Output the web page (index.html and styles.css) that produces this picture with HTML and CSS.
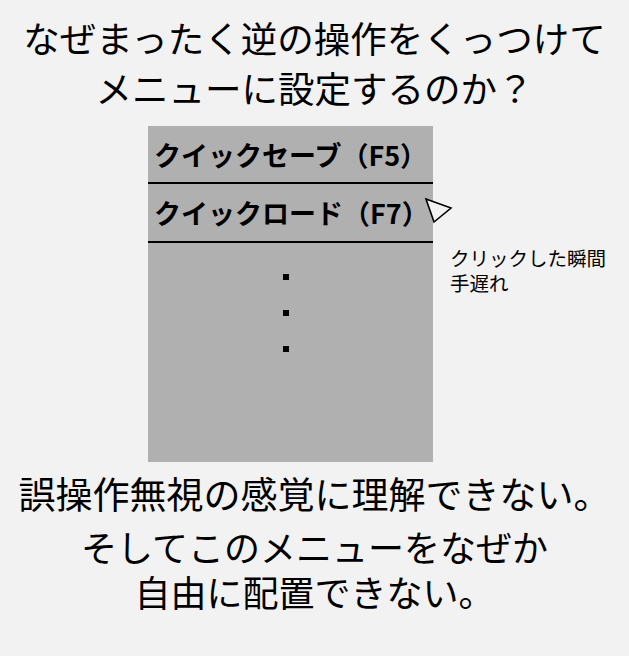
FILE: index.html
```html
<!DOCTYPE html>
<html lang="ja">
<head>
    <meta charset="UTF-8">
    <meta name="viewport" content="width=device-width, initial-scale=1.0">
    <title>クイックロード</title>
    <link rel="stylesheet" href="styles.css">
</head>
<body>
    <h1 class="headline">なぜまったく逆の操作をくっつけて<br>メニューに設定するのか？</h1>

    <div class="stage">
        <div class="menu">
            <div class="menu-item">クイックセーブ（F5）</div>
            <div class="menu-item">クイックロード（F7）</div>
            <div class="menu-more">
                <span class="dot"></span>
                <span class="dot"></span>
                <span class="dot"></span>
            </div>
            <!-- mouse pointer hovering next to the load item -->
            <svg class="pointer" width="30" height="28" viewBox="0 0 30 28">
                <polygon points="2,2 27,11 10,25" fill="#f2f2f2" stroke="#000" stroke-width="1.6" stroke-linejoin="miter"/>
            </svg>
        </div>
        <p class="note">クリックした瞬間<br>手遅れ</p>
    </div>

    <p class="closing">誤操作無視の感覚に理解できない。</p>
    <p class="closing closing-last">そしてこのメニューをなぜか<br>自由に配置できない。</p>
</body>
</html>
```

FILE: styles.css
```css
body {
    margin: 0;
    background-color: #f2f2f2;
    color: #000;
    font-family: "Noto Sans CJK JP", "Noto Sans", sans-serif;
}
.headline {
    margin: 0;
    padding-top: 13px;
    font-size: 36.5px;
    font-weight: 400;
    line-height: 50px;
    text-align: center;
}
.stage {
    display: flex;
    margin-top: 13px;
    padding-left: 148px;
}
.menu {
    position: relative;
    width: 285px;
    height: 336px;
    background-color: #b0b0b0;
}
.menu-item {
    height: 57px;
    padding-left: 6px;
    border-bottom: 2px solid #000;
    font-size: 27px;
    font-weight: 700;
    line-height: 57px;
    white-space: nowrap;
}
.menu-item:first-child {
    height: 56px;
    line-height: 58px;
}
.menu-more {
    display: flex;
    flex-direction: column;
    align-items: center;
    gap: 30px;
    padding-top: 31px;
    padding-right: 9px;
}
.dot {
    width: 6px;
    height: 6px;
    background-color: #000;
}
.pointer {
    position: absolute;
    left: 276px;
    top: 71px;
}
.note {
    margin: 119px 0 0 17px;
    font-size: 19.5px;
    line-height: 25px;
    white-space: nowrap;
}
.closing {
    margin: 8px 0 0;
    font-size: 37px;
    line-height: 46px;
    text-align: center;
}
.closing-last {
    margin-top: 8px;
    font-size: 36px;
    line-height: 45px;
}
```
